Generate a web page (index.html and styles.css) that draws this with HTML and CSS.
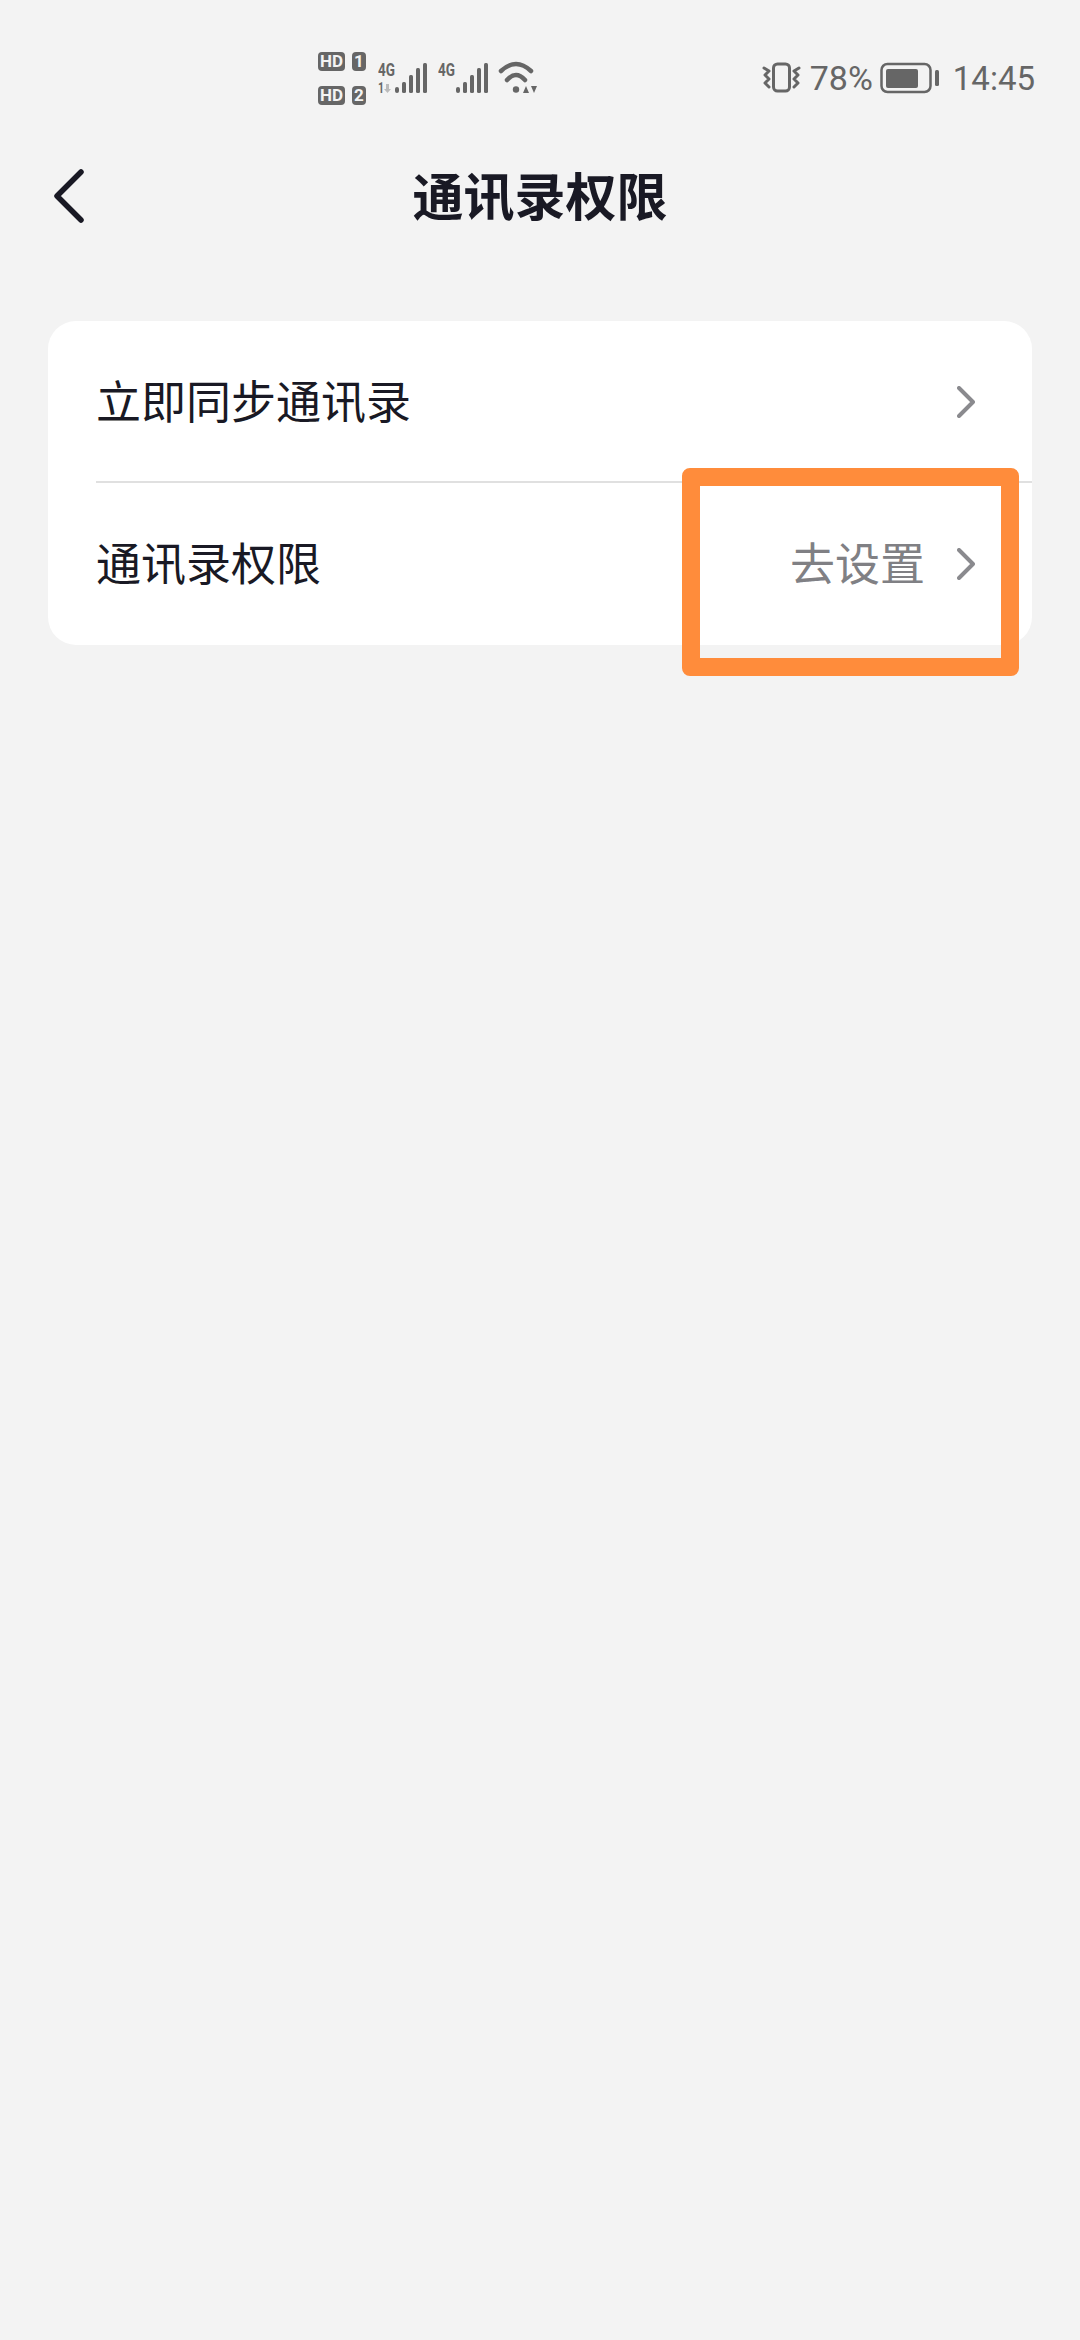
FILE: index.html
```html
<!DOCTYPE html>
<html lang="zh-CN">
<head>
	<meta charset="UTF-8">
	<title>通讯录权限</title>
	<link rel="stylesheet" href="styles.css">
</head>
<body>
	<div class="statusbar">
		<div class="sims">
			<div class="sim"><span class="hd">HD</span><span class="num">1</span></div>
			<div class="sim"><span class="hd">HD</span><span class="num">2</span></div>
		</div>
		<svg class="signal" width="52" height="36" viewBox="0 0 52 36">
			<text x="0" y="16" class="tiny" textLength="17" lengthAdjust="spacingAndGlyphs">4G</text>
			<text x="0" y="33" class="tiny small" textLength="6" lengthAdjust="spacingAndGlyphs">1</text>
			<path d="M8 24l3 0 0 5 2 0-3.500 4-3.500-4 2 0z" fill="#bbb"/>
			<rect x="17" y="27" width="4" height="6" rx="2"/>
			<rect x="24" y="22" width="4" height="11" rx="1.500"/>
			<rect x="31" y="15" width="4" height="18" rx="1.500"/>
			<rect x="38" y="8" width="4" height="25" rx="1.500"/>
			<rect x="45" y="3" width="4" height="30" rx="1.500"/>
		</svg>
		<svg class="signal two" width="52" height="36" viewBox="0 0 52 36">
			<text x="0" y="16" class="tiny" textLength="17" lengthAdjust="spacingAndGlyphs">4G</text>
			<rect x="18" y="27" width="4" height="6" rx="2"/>
			<rect x="25" y="22" width="4" height="11" rx="1.500"/>
			<rect x="32" y="15" width="4" height="18" rx="1.500"/>
			<rect x="39" y="8" width="4" height="25" rx="1.500"/>
			<rect x="46" y="3" width="4" height="30" rx="1.500"/>
		</svg>
		<svg class="wifi" width="40" height="36" viewBox="0 0 40 36">
			<path d="M3 11Q18 -3 33 11M9 20Q18 10 27 20" fill="none" stroke="#666" stroke-width="4.500" stroke-linecap="round"/>
			<circle cx="18" cy="29.500" r="3.200"/>
			<path d="M28 26l3 7h-6zM33 26h6l-3 7z"/>
		</svg>
		<div class="status-right">
			<svg width="39" height="32" viewBox="0 0 39 32">
				<rect x="11.500" y="2" width="16" height="27" rx="4" fill="none" stroke="#666" stroke-width="3"/>
				<path d="M2 6L7 9L3 13L7 17L3 21L7 25M37 6L32 9L36 13L32 17L36 21L32 25" fill="none" stroke="#666" stroke-width="3" stroke-linecap="round" stroke-linejoin="round"/>
			</svg>
			<span class="percent">78%</span>
			<svg class="battery" width="60" height="32" viewBox="0 0 60 32">
				<rect x="1.500" y="2" width="49" height="28" rx="6" fill="none" stroke="#666" stroke-width="2.500"/>
				<rect x="6" y="7" width="32" height="19" rx="2"/>
				<rect x="55" y="8" width="4" height="16" rx="1.500"/>
			</svg>
			<span class="clock">14:45</span>
		</div>
	</div>

	<div class="nav">
		<svg class="back" width="32" height="54" viewBox="0 0 32 54">
			<path d="M28 3L4 27L28 51" fill="none" stroke="#191924" stroke-width="5.500" stroke-linecap="round" stroke-linejoin="round"/>
		</svg>
		<div class="title">通讯录权限</div>
	</div>

	<div class="card">
		<div class="row">
			<span class="label">立即同步通讯录</span>
			<svg class="arrow" width="18" height="32" viewBox="0 0 18 32">
				<path d="M2 2L16 16L2 30" fill="none" stroke="#8a8a8e" stroke-width="4" stroke-linecap="round" stroke-linejoin="round"/>
			</svg>
		</div>
		<div class="line"></div>
		<div class="row">
			<span class="label">通讯录权限</span>
			<span class="action">去设置</span>
			<svg class="arrow" width="18" height="32" viewBox="0 0 18 32">
				<path d="M2 2L16 16L2 30" fill="none" stroke="#8a8a8e" stroke-width="4" stroke-linecap="round" stroke-linejoin="round"/>
			</svg>
		</div>
		<div class="mark"></div>
	</div>
</body>
</html>
```

FILE: styles.css
```css
*{
	margin:0;
	padding:0;
	box-sizing:border-box;
}
body{
	width:1080px;
	height:2340px;
	background:#f3f3f3;
	font-family:"Noto Sans CJK SC","Noto Sans",sans-serif;
	overflow:hidden;
}
svg{
	display:block;
	fill:#666;
	flex:none;
}

/* status bar */
.statusbar{
	height:156px;
	display:flex;
	align-items:center;
	padding:0 45px 0 318px;
	color:#666;
}
.sims{
	display:flex;
	flex-direction:column;
	gap:15px;
	margin-top:1px;
}
.sim{
	display:flex;
	gap:7px;
}
.hd,.num{
	height:19px;
	background:#666;
	color:#f3f3f3;
	border-radius:4px;
	font-family:"Roboto",sans-serif;
	font-weight:700;
	font-size:17px;
	line-height:19px;
	text-align:center;
}
.hd{
	width:27px;
}
.num{
	width:14px;
}
.signal{
	margin-left:12px;
}
.signal.two{
	margin-left:8px;
}
.tiny{
	font-family:"Roboto",sans-serif;
	font-weight:700;
	font-size:18px;
}
.tiny.small{
	font-size:14px;
}
.wifi{
	margin-left:8px;
}
.status-right{
	margin-left:auto;
	display:flex;
	align-items:center;
	font-family:"Roboto",sans-serif;
	font-size:33px;
	color:#666;
}
.percent{
	font-size:34px;
	margin-left:9px;
}
.battery{
	margin-left:7px;
}
.clock{
	margin-left:13px;
}

/* title */
.nav{
	height:84px;
	display:grid;
	grid-template-columns:1fr auto 1fr;
	align-items:center;
	padding:0 0 0 53px;
}
.back{
	margin-bottom:4px;
}
.title{
	font-size:51px;
	font-weight:700;
	color:#191924;
	line-height:60px;
	margin:0 0 8px -53px;
}

/* list */
.card{
	position:relative;
	margin:81px 48px 0;
	background:#fff;
	border-radius:28px;
}
.row{
	height:162px;
	display:flex;
	align-items:center;
	padding:0 57px 0 48px;
}
.label{
	font-size:45px;
	color:#191924;
	flex:1;
	margin-bottom:6px;
}
.action{
	font-size:45px;
	color:#808084;
	margin:0 32px 6px 0;
}
.line{
	height:2px;
	margin-left:48px;
	background:#e0e0e0;
	margin-top:-2px;
}
.mark{
	position:absolute;
	left:634px;
	top:147px;
	width:337px;
	height:208px;
	border:18px solid #ff8c3b;
	border-radius:8px;
}
```
